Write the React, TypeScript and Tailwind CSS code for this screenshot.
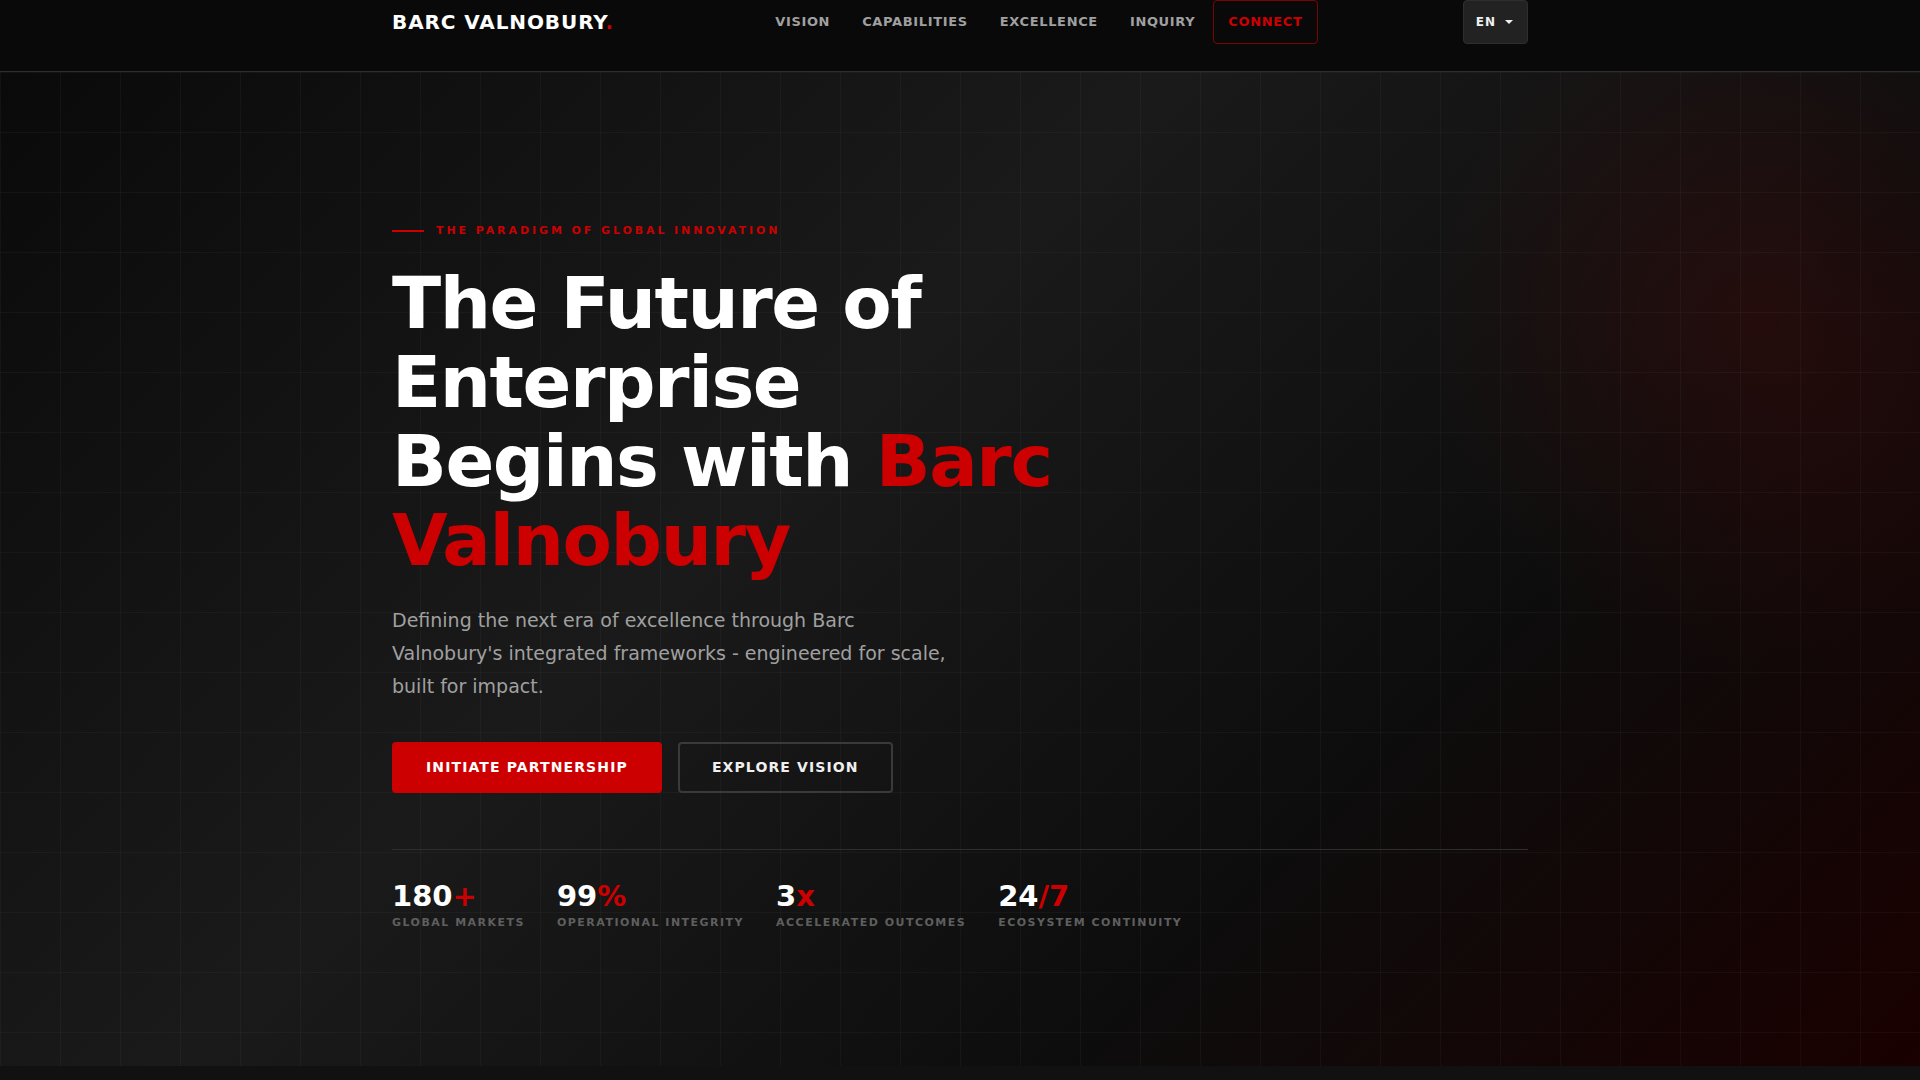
import React from 'react';

const links = [
  { label: 'Vision', href: '#vision' },
  { label: 'Capabilities', href: '#capabilities' },
  { label: 'Excellence', href: '#excellence' },
  { label: 'Inquiry', href: '#inquiry' },
];

const stats = [
  { value: '180', suffix: '+', label: 'Global Markets' },
  { value: '99', suffix: '%', label: 'Operational Integrity' },
  { value: '3', suffix: 'x', label: 'Accelerated Outcomes' },
  { value: '24', suffix: '/7', label: 'Ecosystem Continuity' },
];

function Header() {
  return (
    <header className="h-[72px] bg-[#090909] border-b border-[#2e2e2e]">
      <div className="max-w-[1200px] mx-auto px-8 flex items-start justify-between">
        <a href="#" className="h-11 flex items-center text-xl font-bold tracking-[0.045em] text-white uppercase">
          <span>Barc Valnobury<span className="text-[#cc0000]">.</span></span>
        </a>

        <nav className="flex items-center text-[13px] font-bold tracking-wider uppercase">
          {links.map((link) => (
            <a key={link.label} href={link.href} className="h-11 px-4 flex items-center text-[#a0a0a0] hover:text-white">
              {link.label}
            </a>
          ))}
          <a href="#connect" className="h-11 ml-0.5 px-3.5 flex items-center rounded border border-[#7a0404] text-[#cc0000]">
            Connect
          </a>
        </nav>

        <button
          type="button"
          aria-haspopup="listbox"
          className="h-11 px-3 flex items-center gap-2 rounded border border-[#2e2e2e] bg-[#222222] text-xs font-bold tracking-[0.08em] text-[#f0f0f0]"
        >
          EN
          <svg width="11" height="4" viewBox="0 0 11 4" fill="currentColor" aria-hidden="true">
            <path d="M1 0h8L5 4z" />
          </svg>
        </button>
      </div>
    </header>
  );
}

function Hero() {
  return (
    <section className="relative overflow-hidden min-h-[92vh] flex items-center pt-[18px] bg-[linear-gradient(135deg,#0a0a0a_0%,#1a1a1a_40%,#0d0d0d_70%,#1a0000_100%)]">
      <div className="absolute -top-[10%] -right-[10%] size-[700px] bg-[radial-gradient(circle,rgba(204,0,0,0.12)_0%,transparent_70%)]" />
      <div className="absolute inset-0 bg-[linear-gradient(rgba(255,255,255,0.03)_1px,transparent_1px),linear-gradient(90deg,rgba(255,255,255,0.03)_1px,transparent_1px)] bg-[size:60px_60px]" />

      <div className="relative w-full max-w-[1200px] mx-auto px-8">
        <p className="flex items-center gap-3 mb-6 text-[11px] leading-[18px] font-bold tracking-[0.265em] uppercase text-[#cc0000]">
          <span className="w-8 h-0.5 bg-[#cc0000]" />
          The Paradigm of Global Innovation
        </p>

        <h1 className="max-w-[800px] mb-6 text-[72px] leading-[79px] font-bold tracking-[-0.02em] text-white">
          The Future of Enterprise
          <br />
          Begins with <span className="text-[#cc0000]">Barc Valnobury</span>
        </h1>

        <p className="max-w-[570px] mb-[39px] text-[19px] leading-[33px] text-[#a0a0a0]">
          Defining the next era of excellence through Barc Valnobury's integrated frameworks - engineered for scale,
          built for impact.
        </p>

        <div className="flex gap-4 text-sm leading-[23px] font-bold tracking-[0.08em] uppercase">
          <a href="#inquiry" className="px-8 py-3 rounded border-2 border-[#cc0000] bg-[#cc0000] text-white">
            Initiate Partnership
          </a>
          <a href="#vision" className="px-8 py-3 rounded border-2 border-[#3a3a3a] text-[#f0f0f0]">
            Explore Vision
          </a>
        </div>

        <div className="flex gap-8 mt-14 pt-8 border-t border-[#2e2e2e]">
          {stats.map((stat) => (
            <div key={stat.label}>
              <div className="mb-0.5 text-[29px] leading-[29px] font-bold text-white">
                {stat.value}
                <span className="text-[#cc0000]">{stat.suffix}</span>
              </div>
              <div className="text-[11px] leading-5 font-bold tracking-[0.135em] uppercase text-[#5f5f5f]">{stat.label}</div>
            </div>
          ))}
        </div>
      </div>
    </section>
  );
}

export default function App() {
  return (
    <div className="min-h-screen bg-[#111111] font-['DejaVu_Sans',sans-serif]">
      <Header />
      <main>
        <Hero />
      </main>
    </div>
  );
}
